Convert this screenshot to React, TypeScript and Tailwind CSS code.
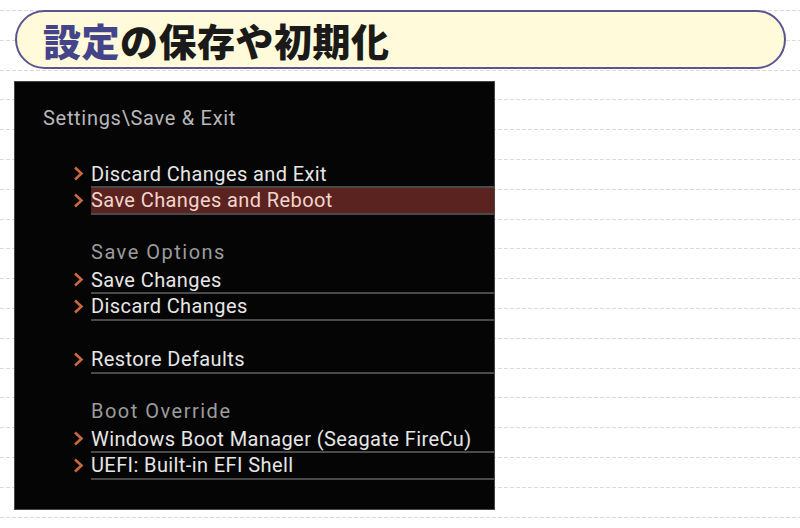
const ITEMS: Array<{ kind: 'empty' | 'title' | 'label' | 'item'; text?: string; active?: boolean }> = [
  { kind: 'empty' },
  { kind: 'title', text: 'Settings\\Save & Exit' },
  { kind: 'empty' },
  { kind: 'item', text: 'Discard Changes and Exit' },
  { kind: 'item', text: 'Save Changes and Reboot', active: true },
  { kind: 'empty' },
  { kind: 'label', text: 'Save Options' },
  { kind: 'item', text: 'Save Changes' },
  { kind: 'item', text: 'Discard Changes' },
  { kind: 'empty' },
  { kind: 'item', text: 'Restore Defaults' },
  { kind: 'empty' },
  { kind: 'label', text: 'Boot Override' },
  { kind: 'item', text: 'Windows Boot Manager (Seagate FireCu)' },
  { kind: 'item', text: 'UEFI: Built-in EFI Shell' },
];

const Chevron = () => (
  <svg width="11" height="15" viewBox="0 0 11 15" className="shrink-0">
    <polyline points="2,1.5 8.5,7.5 2,13.5" fill="none" stroke="#c8683e" strokeWidth="2.6" strokeLinejoin="miter" />
  </svg>
);

export default function App() {
  return (
    <div className="relative w-[800px] h-[528px] overflow-hidden bg-white">
      {/* dashed ruled-paper lines */}
      <div className="absolute inset-0 flex flex-col gap-[28.8px] pt-[10px] pointer-events-none">
        {Array.from({ length: 18 }).map((_, i) => (
          <div
            key={i}
            className="h-px w-full shrink-0 bg-[repeating-linear-gradient(90deg,#dadada_0_4px,transparent_4px_6px)]"
          />
        ))}
      </div>

      <div className="relative flex flex-col">
        {/* Heading pill */}
        <div className="mt-[10px] ml-[15px] w-[771px] h-[59px] rounded-full border-2 border-[#5b5590] bg-[#fffad9] flex items-center pl-[26px]">
          <h1
            className="text-[38px] leading-none font-black text-[#1a1a1a] tracking-[0.5px]"
            style={{ fontFamily: '"Noto Sans CJK JP", "Noto Sans", sans-serif' }}
          >
            <span className="text-[#44448a]">設定</span>の保存や初期化
          </h1>
        </div>

        {/* BIOS screenshot */}
        <div
          className="mt-[12px] ml-[14px] w-[481px] h-[429px] bg-[#050505] border border-[#4a4545] flex flex-col"
          style={{ fontFamily: 'Roboto, "Liberation Sans", sans-serif' }}
        >
          {ITEMS.map((row, i) => {
            if (row.kind === 'empty') return <div key={i} className="h-[26.5px] shrink-0" />;
            if (row.kind === 'title')
              return (
                <div key={i} className="h-[26.5px] shrink-0 flex items-center pl-[28px] pb-[8px] text-[20px] tracking-[0.7px] text-[#b8b8b8]">
                  {row.text}
                </div>
              );
            if (row.kind === 'label')
              return (
                <div key={i} className="h-[26.5px] shrink-0 flex items-center pl-[76px] pb-[4px] text-[20px] tracking-[1.5px] text-[#9c9c9c]">
                  {row.text}
                </div>
              );
            return (
              <div key={i} className="h-[26.5px] shrink-0 flex">
                <div className="w-[76px] shrink-0 flex items-center justify-end pr-[7px] pb-[2px]">
                  <Chevron />
                </div>
                <div
                  className={`flex-1 flex items-center border-b-2 border-[#4a4a4a] text-[20px] tracking-[0.4px] leading-none ${
                    row.active ? 'bg-[#5b2320] text-[#f2d5cd]' : 'text-[#e6e6e6]'
                  }`}
                >
                  {row.text}
                </div>
              </div>
            );
          })}
        </div>
      </div>
    </div>
  );
}
